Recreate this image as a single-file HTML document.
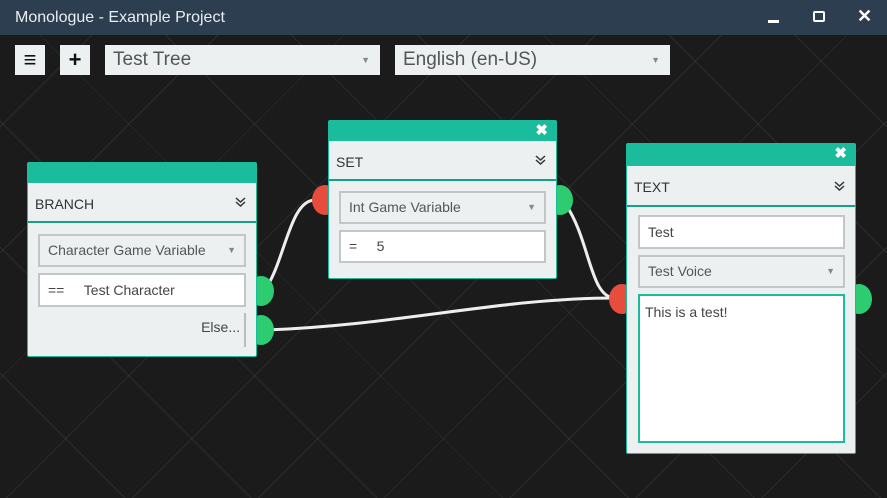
<!DOCTYPE html>
<html><head><style>
*{box-sizing:border-box;margin:0;padding:0}
body{width:887px;height:498px;overflow:hidden;font-family:"Liberation Sans",sans-serif;background:#1b1b1b;position:relative;
background-image:repeating-linear-gradient(45deg,transparent 0 88px,rgba(255,255,255,.07) 88px 89px),repeating-linear-gradient(-45deg,transparent 0 88px,rgba(255,255,255,.07) 88px 89px);}
.a{position:absolute}
.title{left:0;top:0;width:887px;height:35px;background:#2c3e50;color:#e8eef2;font-size:16px;line-height:35px;padding-left:15px}
.btn{background:#ecf0f1;width:30px;height:30px;top:45px;font-size:22px;font-weight:bold;text-align:center;line-height:30px;color:#111}
.sel{background:#ecf0f1;color:#555;font-size:19px;line-height:30px;padding-left:8px;top:45px;height:30px}
.arr{position:absolute;right:10px;top:0;font-size:9px;color:#888}
.node{background:#ecf0f1;border:1px solid #1abc9c;border-radius:2px}
.hd{position:absolute;left:0;right:0;top:0;background:#1abc9c}
.tt{position:absolute;left:0;right:0;border-bottom:2px solid #16a085;font-size:14px;color:#333;padding-left:7px}
.fld{position:absolute;background:#fff;border:2px solid #c2c6c9;font-size:14px;color:#444;padding-left:8px}
.fs{background:#ecf0f1;color:#555}
.port{position:absolute;width:26px;height:30px;border-radius:50%}
.g{background:#2ecc71}.r{background:#e74c3c}
.x{position:absolute;right:8px;top:0;color:#fff;font-size:15px;font-weight:bold}
.chev{position:absolute;right:10px;top:50%;margin-top:-6px}
</style></head><body>
<div class="a title">Monologue - Example Project</div>
<div style="position:absolute;left:768px;top:20px;width:11px;height:3px;background:#fff"></div>
<div style="position:absolute;left:813px;top:11px;width:12px;height:11px;border:2px solid #fff;border-radius:2px"></div>
<div class="a" style="left:857px;top:6px;color:#fff;font-size:18px;font-weight:bold">✕</div>
<div class="a btn" style="left:15px">≡</div>
<div class="a btn" style="left:60px">+</div>
<div class="a sel" style="left:105px;width:275px">Test Tree<span class="arr">▼</span></div>
<div class="a sel" style="left:395px;width:275px">English (en-US)<span class="arr">▼</span></div>
<svg class="a" style="left:0;top:0" width="887" height="498"><g fill="none" stroke="#eee" stroke-width="3">
<path d="M266 288 C285 260 290 200 315 200"/><path d="M266 330 C400 325 500 298 615 298"/><path d="M566 205 C590 240 590 298 615 298"/></g></svg>
<div class="port g" style="left:248px;top:276px"></div>
<div class="port g" style="left:248px;top:315px"></div>
<div class="port r" style="left:312px;top:185px"></div>
<div class="port g" style="left:547px;top:185px"></div>
<div class="port r" style="left:609px;top:284px"></div>
<div class="port g" style="left:846px;top:284px"></div>
<div class="a node" style="left:27px;top:162px;width:230px;height:195px">
<div class="hd" style="height:20px"></div>
<div class="tt" style="top:20px;height:40px;line-height:42px">BRANCH<svg class="chev" width="11" height="12"><path d="M1 2l4.5 4 4.5-4M1 6l4.5 4 4.5-4" fill="none" stroke="#333" stroke-width="1.5"/></svg></div>
<div class="fld fs" style="left:10px;top:71px;width:208px;height:33px;line-height:29px">Character Game Variable<span class="arr" style="right:8px">▼</span></div>
<div class="fld" style="left:10px;top:110px;width:208px;height:34px;line-height:30px">==&nbsp;&nbsp;&nbsp;&nbsp;&nbsp;Test Character</div>
<div class="a" style="right:16px;top:156px;font-size:14px;color:#444">Else...</div>
<div class="a" style="left:216px;top:150px;width:2px;height:34px;background:#bbb"></div>
</div>
<div class="a node" style="left:328px;top:120px;width:229px;height:159px">
<div class="hd" style="height:20px"><span class="x">✖</span></div>
<div class="tt" style="top:20px;height:40px;line-height:42px">SET<svg class="chev" width="11" height="12"><path d="M1 2l4.5 4 4.5-4M1 6l4.5 4 4.5-4" fill="none" stroke="#333" stroke-width="1.5"/></svg></div>
<div class="fld fs" style="left:10px;top:70px;width:207px;height:33px;line-height:29px">Int Game Variable<span class="arr" style="right:8px">▼</span></div>
<div class="fld" style="left:10px;top:109px;width:207px;height:33px;line-height:29px">=&nbsp;&nbsp;&nbsp;&nbsp;&nbsp;5</div>
</div>
<div class="a node" style="left:626px;top:143px;width:230px;height:311px">
<div class="hd" style="height:22px"><span class="x">✖</span></div>
<div class="tt" style="top:22px;height:41px;line-height:42px">TEXT<svg class="chev" width="11" height="12"><path d="M1 2l4.5 4 4.5-4M1 6l4.5 4 4.5-4" fill="none" stroke="#333" stroke-width="1.5"/></svg></div>
<div class="fld" style="left:11px;top:71px;width:207px;height:34px;line-height:30px">Test</div>
<div class="fld fs" style="left:11px;top:111px;width:207px;height:33px;line-height:29px">Test Voice<span class="arr" style="right:8px">▼</span></div>
<div class="fld" style="left:11px;top:150px;width:207px;height:149px;border-color:#1abc9c;padding-left:5px;line-height:32px">This is a test!</div>
</div>
</body></html>
